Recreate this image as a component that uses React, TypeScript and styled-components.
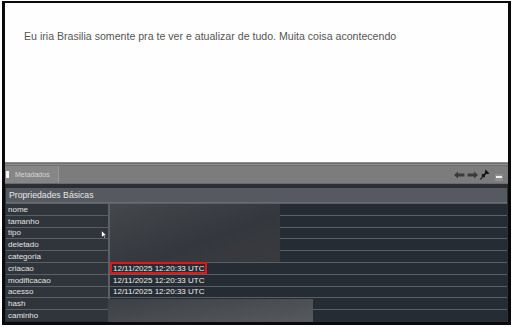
import { Fragment } from "react";
import styled, { createGlobalStyle } from "styled-components";

const GlobalStyle = createGlobalStyle`
  html, body { margin: 0; padding: 0; background: #fff; }
  body { width: 513px; height: 327px; overflow: hidden; font-family: "Liberation Sans", Arial, sans-serif; }
`;

const Page = styled.div`
  width: 513px;
  height: 327px;
  padding: 1px 2px 2px 2px;
  box-sizing: border-box;
`;

const Frame = styled.div`
  height: 100%;
  box-sizing: border-box;
  border: 3px solid #0a0a0a;
  border-top-width: 2px;
  display: flex;
  flex-direction: column;
`;

const Message = styled.div`
  height: 159px;
  background: #fefefe;
  padding: 27px 0 0 19px;
  box-sizing: border-box;
  font-size: 10.6px;
  color: #555;
`;

const Stripe = styled.div`
  height: 4px;
  background: repeating-linear-gradient(#8c8c8c 0 1px, #6f6f6f 1px 2px);
`;

const TabBar = styled.div`
  height: 18px;
  box-sizing: border-box;
  background: #7c7c7c;
  display: flex;
  align-items: stretch;
  border-bottom: 1px solid #6a6a6a;
`;

const Tab = styled.div`
  width: 52px;
  display: flex;
  align-items: center;
  gap: 6px;
  padding-left: 1px;
  background: #868686;
  border-right: 1px solid #999;
  font-size: 7px;
  color: #d6d6d6;
`;

const TabBox = styled.span`
  width: 3px;
  height: 7px;
  background: #f4f4f4;
`;

const Tools = styled.div`
  margin-left: auto;
  display: flex;
  align-items: center;
  gap: 2px;
  padding-right: 5px;
`;

const MinButton = styled.span`
  width: 8px;
  height: 7px;
  margin-left: 3px;
  margin-top: 5px;
  background: #8e8e8e;
  display: flex;
  align-items: center;
  justify-content: center;
  &::after {
    content: "";
    width: 6px;
    height: 2px;
    background: #eee;
  }
`;

const DarkLine = styled.div`
  height: 4px;
  background: #2a2f35;
`;

const Panel = styled.div`
  flex: 1;
  background: #2c3138;
  display: flex;
  flex-direction: column;
  padding: 0 1px;
  position: relative;
`;

const Header = styled.div`
  height: 15px;
  box-sizing: border-box;
  background: #565a60;
  color: #e6e6e6;
  font-size: 8.7px;
  padding-left: 3px;
  display: flex;
  align-items: center;
  border-bottom: 1px solid #6a6e74;
`;

const Table = styled.div`
  display: grid;
  grid-template-columns: 102px 1fr;
  grid-auto-rows: 10.8px;
  row-gap: 1px;
  column-gap: 2px;
  background: #5b6067;
  padding-top: 1px;
`;

const Label = styled.div`
  background: #30353c;
  color: #e2e2e2;
  font-size: 8px;
  padding-left: 2px;
  display: flex;
  align-items: center;
`;

const Value = styled.div`
  background: #262c34;
  color: #ececec;
  font-size: 8px;
  display: flex;
  align-items: center;
  padding-left: 3px;
  position: relative;
`;

const Highlight = styled.span`
  position: absolute;
  left: 0;
  top: -1px;
  width: 97px;
  height: 12px;
  border: 2px solid #e01818;
  box-sizing: border-box;
`;

const Blur = styled.div<{ $l: number; $t: number; $w: number; $h: number; $bg: string }>`
  position: absolute;
  left: ${(p) => p.$l}px;
  top: ${(p) => p.$t}px;
  width: ${(p) => p.$w}px;
  height: ${(p) => p.$h}px;
  background: ${(p) => p.$bg};
`;

const Cursor = styled.svg`
  position: absolute;
  left: 96px;
  top: 42px;
`;

const rows: [string, string?][] = [
  ["nome"],
  ["tamanho"],
  ["tipo"],
  ["deletado"],
  ["categoria"],
  ["criacao", "12/11/2025 12:20:33 UTC"],
  ["modificacao", "12/11/2025 12:20:33 UTC"],
  ["acesso", "12/11/2025 12:20:33 UTC"],
  ["hash"],
  ["caminho"],
];

const Arrow = ({ flip }: { flip?: boolean }) => (
  <svg width="11" height="8" viewBox="0 0 11 8" style={flip ? { transform: "scaleX(-1)" } : undefined}>
    <path d="M0 4 L4 0.5 L4 2.5 L10.5 2.5 L10.5 5.5 L4 5.5 L4 7.5 Z" fill="#3a3a3a" />
  </svg>
);

export default function App() {
  return (
    <>
      <GlobalStyle />
      <Page>
        <Frame>
          <Message>Eu iria Brasilia somente pra te ver e atualizar de tudo. Muita coisa acontecendo</Message>
          <Stripe />
          <TabBar>
            <Tab>
              <TabBox />
              Metadados
            </Tab>
            <Tools>
              <Arrow />
              <Arrow flip />
              <svg width="10" height="11" viewBox="0 0 10 11">
                <path d="M5.5 0.5 L9.5 4.5 L8 5 L6.5 4.8 L4.8 6.5 L5 8 L4 8.5 L1.5 6 L2 5 L3.5 5.2 L5.2 3.5 L5 2 Z" fill="#111" />
                <path d="M3 7 L0.5 10.5" stroke="#111" strokeWidth="1.2" />
              </svg>
              <MinButton />
            </Tools>
          </TabBar>
          <DarkLine />
          <Panel>
            <Header>Propriedades Básicas</Header>
            <Table>
              {rows.map(([k, v]) => (
                <Fragment key={k}>
                  <Label>{k}</Label>
                  <Value>
                    {v}
                    {k === "criacao" && <Highlight />}
                  </Value>
                </Fragment>
              ))}
            </Table>
            <Blur $l={105} $t={16} $w={170} $h={58} $bg="linear-gradient(160deg, #44474c, #34383e 60%, #3a3a3e)" />
            <Blur $l={103} $t={111} $w={205} $h={23} $bg="linear-gradient(170deg, #3c4046, #56595d)" />
            <Cursor width="6" height="9" viewBox="0 0 6 9">
              <path d="M0.5 0.5 L0.5 7.5 L2.3 5.8 L3.6 8.5 L4.6 8 L3.4 5.4 L5.6 5.4 Z" fill="#fff" stroke="#222" strokeWidth="0.6" />
            </Cursor>
          </Panel>
        </Frame>
      </Page>
    </>
  );
}
